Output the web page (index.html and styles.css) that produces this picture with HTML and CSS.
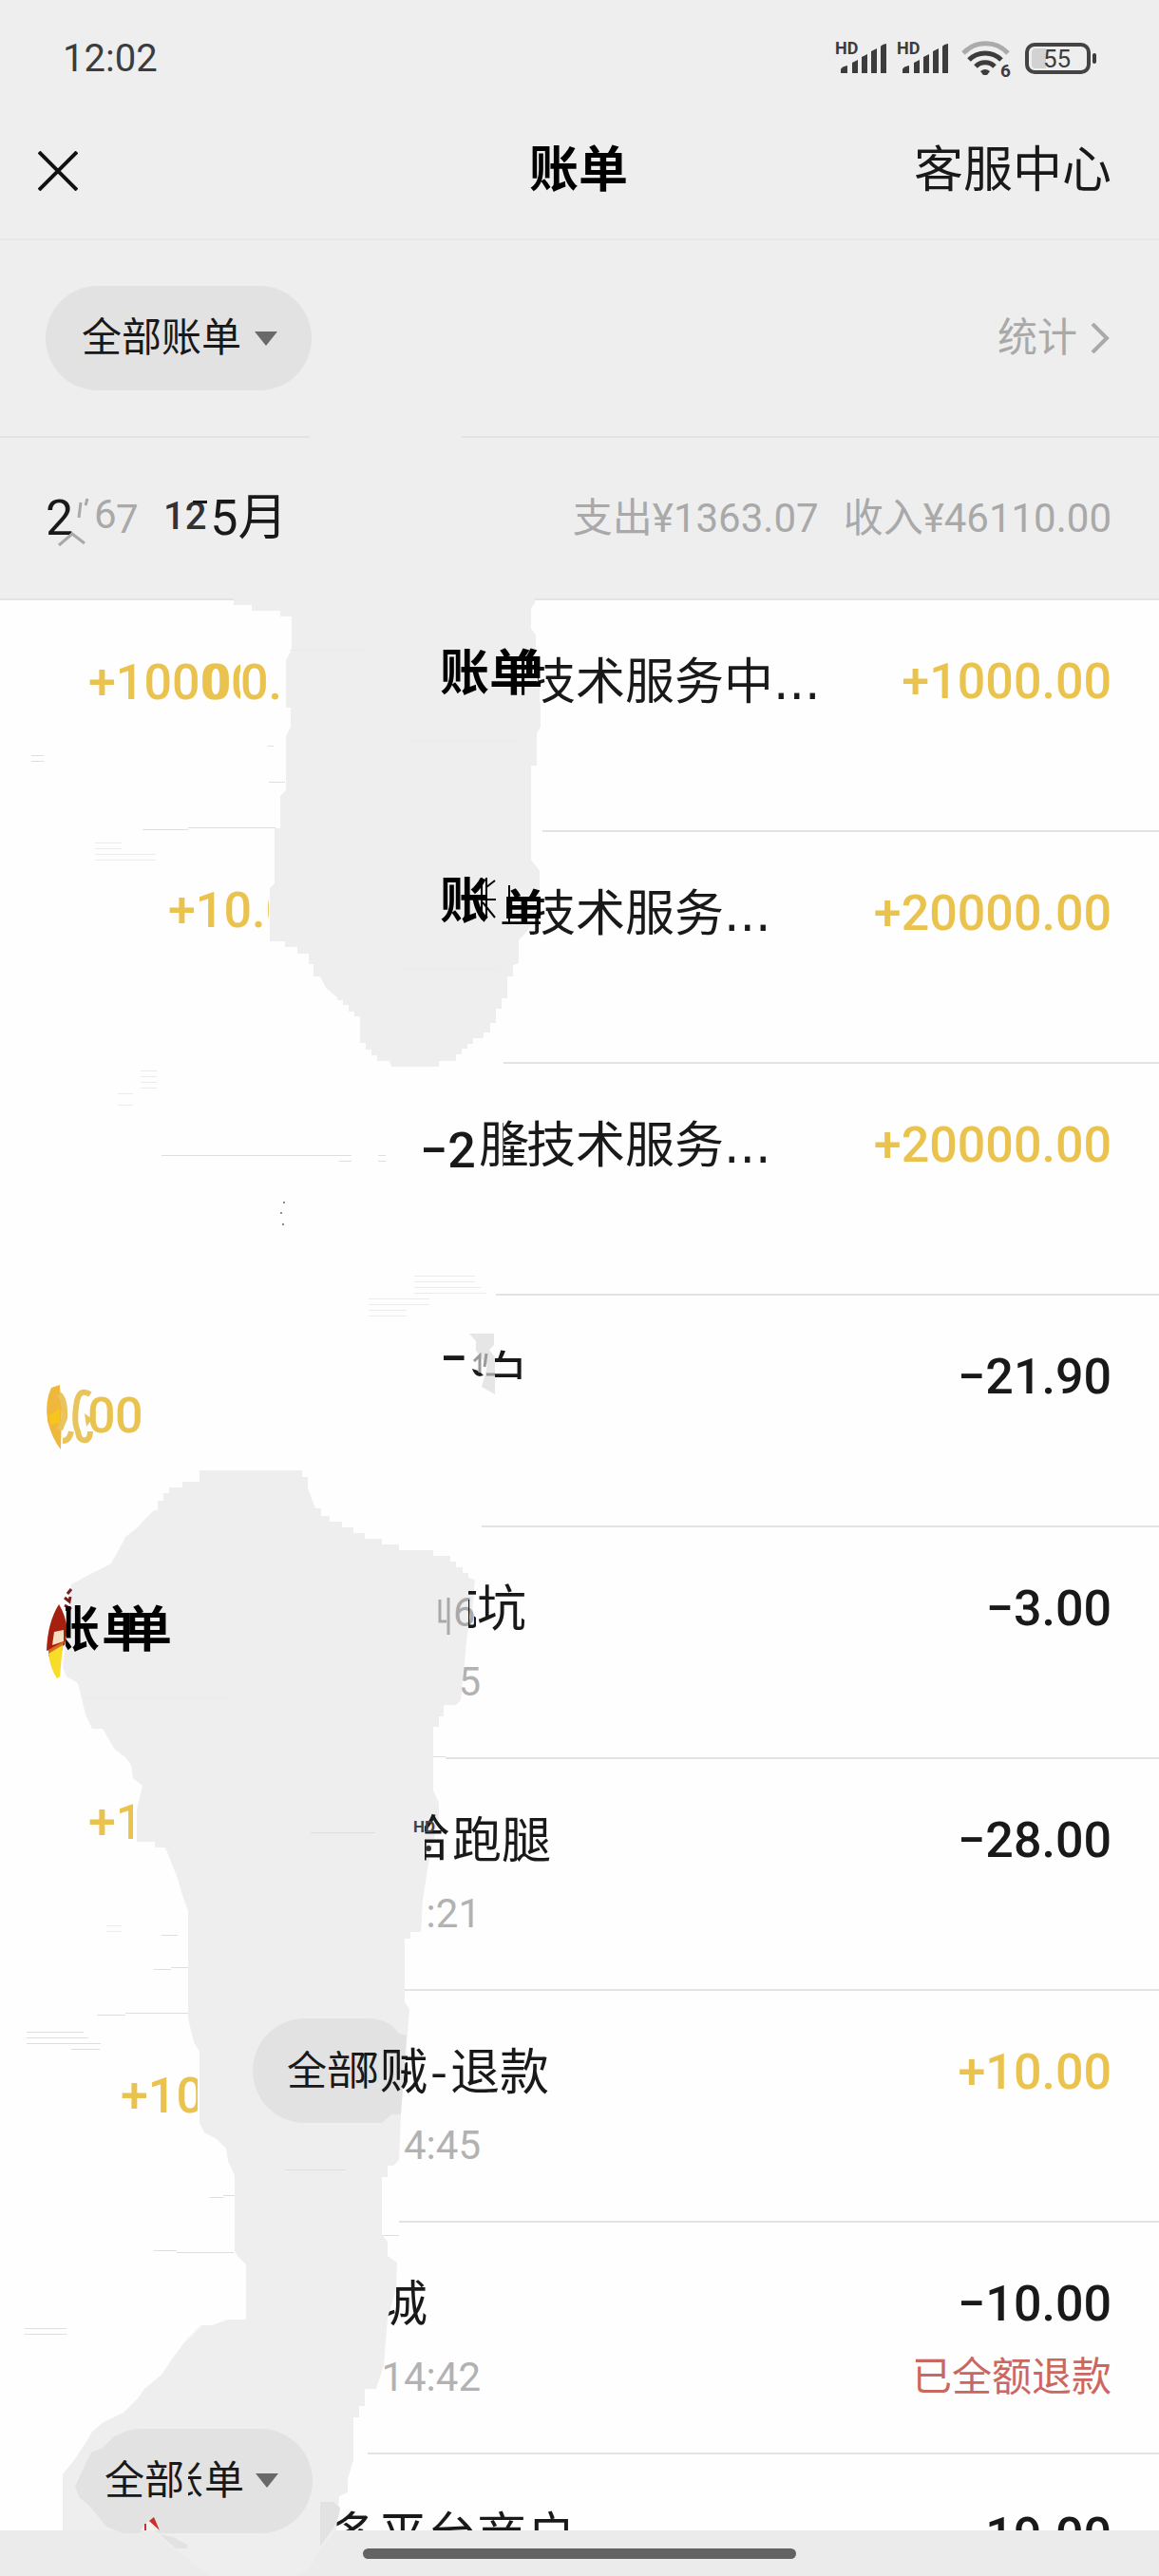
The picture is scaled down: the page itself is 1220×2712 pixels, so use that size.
FILE: index.html
```html
<!DOCTYPE html>
<html lang="zh-CN">
<head>
  <meta charset="UTF-8">
  <meta name="viewport" content="width=device-width, initial-scale=1">
  <title>账单</title>
  <link rel="stylesheet" href="styles.css">
</head>
<body>
  <div class="screen">

    <!-- Status bar -->
    <div class="status-bar">
      <span class="clock">12:02</span>
      <svg class="status-icons" viewBox="870 30 300 70" width="300" height="70">
        <g id="signal" fill="#3c3c3c">
          <text class="hd" x="879" y="57">HD</text>
          <path d="M885 77v-4q1-3 7-4v8zM897 77v-11l6-3v14zM907 77v-17l6-3v20zM917 77v-23l6-3v26zM927 77v-28q1-2 6-3v31z"/>
        </g>
        <use href="#signal" x="65"/>
        <g fill="none" stroke-width="5">
          <path stroke="#ababab" d="M1014 56a32 32 0 0 1 47 0"/>
          <path stroke="#3c3c3c" d="M1020 63a24 24 0 0 1 34 0"/>
          <path stroke="#3c3c3c" d="M1027 70a14 14 0 0 1 20 0"/>
        </g>
        <path fill="#3c3c3c" d="M1032 75q5-4 10 0l-3 4h-4z"/>
        <text class="wifi-gen" x="1053" y="81">6</text>
        <rect x="1081" y="47" width="65" height="29" rx="8" fill="none" stroke="#444" stroke-width="4"/>
        <path fill="#d2d2d2" d="M1089 51h12v21h-12q-3-1-3-4v-13q0-3 3-4z"/>
        <rect x="1150" y="56" width="4" height="11" rx="2" fill="#3c3c3c"/>
        <text class="battery" x="1098" y="71">55</text>
      </svg>
    </div>

    <!-- Title bar -->
    <header class="nav">
      <button class="close" aria-label="关闭">
        <svg viewBox="0 0 42 42" width="42" height="42"><path d="M1 1l40 40M41 1L1 41"/></svg>
      </button>
      <h1>账单</h1>
      <a href="#" class="service">客服中心</a>
    </header>

    <!-- Filter -->
    <div class="filter">
      <button class="pill">全部账单<svg viewBox="0 0 24 15" width="24" height="15"><path d="M0 0h24L12 15z"/></svg></button>
      <a href="#" class="stats">统计<svg viewBox="0 0 20 32" width="20" height="32"><path d="M2 1l15 15L2 31"/></svg></a>
    </div>

    <!-- Month summary -->
    <div class="month">
      <button class="month-pick"><span>2</span><span>5月</span></button>
      <div class="summary"><span>支出¥1363.07</span><span>收入¥46110.00</span></div>
    </div>

    <!-- Bills -->
    <ul class="bills">
      <li class="bill">
        <div class="info"><p class="name hide-7">技术服务中<span class="dots">...</span></p></div>
        <div class="sum"><p class="amount income">+1000.00</p></div>
      </li>
      <li class="bill">
        <div class="info"><p class="name hide-7">技术服务<span class="dots">...</span></p></div>
        <div class="sum"><p class="amount income">+20000.00</p></div>
      </li>
      <li class="bill">
        <div class="info"><p class="name hide-7">技术服务<span class="dots">...</span></p></div>
        <div class="sum"><p class="amount income">+20000.00</p></div>
      </li>
      <li class="bill">
        <div class="info"></div>
        <div class="sum"><p class="amount">−21.90</p></div>
      </li>
      <li class="bill">
        <div class="info"><p class="name hide-6">坑</p><p class="time">5</p></div>
        <div class="sum"><p class="amount">−3.00</p></div>
      </li>
      <li class="bill">
        <div class="info"><p class="name hide-5">跑腿</p><p class="time">:21</p></div>
        <div class="sum"><p class="amount">−28.00</p></div>
      </li>
      <li class="bill">
        <div class="info"><p class="name hide-4">贼<span class="dash">-</span>退款</p><p class="time">4:45</p></div>
        <div class="sum"><p class="amount income">+10.00</p></div>
      </li>
      <li class="bill">
        <div class="info"><p class="name hide-4">城</p><p class="time">14:42</p></div>
        <div class="sum"><p class="amount">−10.00</p><p class="refund">已全额退款</p></div>
      </li>
      <li class="bill">
        <div class="info"><p class="name hide-3">多平台商户</p></div>
        <div class="sum"><p class="amount">19.00</p></div>
      </li>
    </ul>

    <div class="home-bar"><span></span></div>

    <!-- Smudges over the left side of the list -->
    <svg class="smudge" viewBox="0 0 1220 2712" width="1220" height="2712" aria-hidden="true">
      <defs>
        <clipPath id="c-zero"><rect x="245" y="690" width="8" height="60"/></clipPath>
        <clipPath id="c-dan2"><rect x="549" y="680" width="20" height="60"/></clipPath>
        <clipPath id="c-ten"><rect x="170" y="930" width="113" height="60"/></clipPath>
        <clipPath id="c-yue"><rect x="500" y="1170" width="30" height="70"/></clipPath>
        <clipPath id="c-long"><rect x="530" y="1170" width="30" height="70"/></clipPath>
        <clipPath id="c-bai"><rect x="521" y="1396" width="40" height="56"/></clipPath>
        <clipPath id="c-one"><rect x="90" y="1890" width="50" height="60"/></clipPath>
        <clipPath id="c-plusten"><rect x="120" y="2180" width="88" height="60"/></clipPath>
        <clipPath id="c-ha"><rect x="447" y="1900" width="30" height="70"/></clipPath>
        <clipPath id="c-zhang"><rect x="69" y="1680" width="40" height="70"/></clipPath>
        <clipPath id="c-dan"><rect x="109" y="1680" width="27" height="70"/></clipPath>
        <clipPath id="c-half"><rect x="135" y="1680" width="60" height="70"/></clipPath>
        <clipPath id="c-ghost"><rect x="380" y="2140" width="18" height="70"/></clipPath>
        <clipPath id="c-left"><rect x="400" y="2140" width="29" height="70"/></clipPath>
        <clipPath id="c-cut"><rect x="198" y="2580" width="15" height="60"/></clipPath>
        <clipPath id="c-top"><rect x="520" y="932" width="49" height="41"/></clipPath>
        <clipPath id="c-keng"><rect x="493" y="1660" width="8" height="70"/></clipPath>
        <clipPath id="c-five"><rect x="200" y="515" width="18" height="15"/></clipPath>
      </defs>

      <!-- separators wiped out on the left -->
      <path class="paper" d="M0 872h571v6H0zM0 1116h530v6H0zM0 1360h522v6H0zM0 1604h507v6H0zM0 1848h469v6H0zM0 2092h426v6H0zM0 2336h420v6H0zM0 2581h387v6H0z"/>
      <path class="band" d="M326 456h160v8H326z"/>

      <!-- grey blots -->
      <path class="band" d="M246 625V637H265V643H295V649H307V684L301 695V745H306V765L301 775V832L295 838V872H289V930L284 935V991H300V997H313V1004H325V1015H330V1028H337L343 1040 355 1050V1053H361V1058H367V1065H373V1070H379V1098H385V1105H391V1111H397V1117H410L412 1123H462V1117H480V1110H486V1104H492V1099H498V1093H509V1087H516V1077H522V1062H528V1051H534V1028H540V1016L546 1014V990L555 980 562 968 568 950V917L559 905V806H565V772L569 765V745L564 690V668L559 662V640L563 635V625z"/>
      <path class="band" d="M210 1548H318V1555H324V1567L332 1588H338V1596H347V1602H360V1608H372V1614H384V1620H402V1626H420V1632H456V1638H474V1644H480V1650H487V1656H493V1661L500 1663 497 1700 492 1720 485 1790 480 1795H467V1807H462V1818H456V1885L462 1898V1915L453 1950 445 2000 443 2034H432V2041H426V2108L431 2115 429 2140 422 2225 420 2274 414 2280H408V2292H402V2353L408 2360V2375L418 2382 417 2410 408 2440 404 2490 396 2515H384V2533H378V2545H372V2590L366 2610V2624L357 2628 354 2664 340 2680 325 2705 310 2712H220L160 2664H66V2605L78 2590 90 2572 97 2560 109 2550 130 2540 145 2525 152 2515 170 2500 180 2485 195 2465 212 2448H223L240 2442H259V2384L250 2375 247 2370V2290L240 2275 238 2262 228 2252 215 2245 210 2235V2160L204 2150 198 2125V2012L192 1995 186 1975 180 1960 174 1945H163V1939H144V1905L150 1880 140 1872 138 1858 132 1850 121 1842 108 1820H97L90 1805 84 1780 82 1772 70 1765 66 1755 75 1668 90 1660 117 1646 127 1628 132 1618 145 1608 152 1600 162 1590H166V1580H172V1572H178V1566H192V1560H210z"/>

      <!-- stray line fragments -->
      <path class="hair" d="M150 873.500h48M198 871.500h92M283 823.500h17M33 795.500h13M33 801.500h13M282 785.500h6M170 1216.500h200M357 1222.500h13M398 1216.500h8M398 1222.500h8M327 1929.500h68M300 2284.500h64M170 2037.500h17M162 2073.500h18M180 2071.500h18M102 2121.500h30M132 2119.500h66M28 2139.500h60M28 2145.500h65M28 2151.500h78M75 2157.500h30M221 2313.500h14M235 2311.500h12M162 2369.500h24M186 2371.500h60M402 2353.500h18M26 2451.500h44M26 2457.500h44M456 1849.500h13"/>
      <path class="hair faint" d="M100 887.500h28M100 893.500h28M100 899.500h64M100 905.500h64M148 1127.500h17M148 1133.500h17M148 1139.500h17M148 1145.500h17M124 1151.500h16M124 1163.500h16M436 1343.500h64M436 1349.500h64M436 1355.500h70M436 1361.500h76M388 1367.500h64M388 1373.500h64M388 1379.500h40M388 1385.500h40M305 684.500h80M433 780.500h110M425 1020.500h100M90 1788.500h150M112 2027.500h16M112 2033.500h16"/>

      <!-- month row -->
      <text class="grey" x="99" y="556">6</text>
      <text class="grey" x="122" y="561">7</text>
      <text class="clock-mark" x="172" y="557">12</text>
      <text class="big" x="196" y="564" clip-path="url(#c-five)">5</text>
      <path class="tick" d="M62 574l14-12 13 10M83 545l2-16M90 532l2-7"/>

      <!-- first two rows -->
      <text class="gold" x="93" y="736">+1000</text>
      <text class="gold" x="214" y="736">0</text>
      <text class="gold" x="243" y="736" clip-path="url(#c-zero)">0</text>
      <text class="gold" x="253" y="736">0.</text>
      <text class="gold" x="177" y="976" clip-path="url(#c-ten)">+10.0</text>
      <text class="heavy" x="463" y="727">账单</text>
      <text class="heavy" x="523" y="727" clip-path="url(#c-dan2)">单</text>
      <text class="heavy" x="463" y="967">账</text>
      <path class="stem" d="M507 924v44M512 924v42M536 932v40"/>
      <path class="stem" d="M506 947h16M512 934l9-7M508 950l13 16"/>
      <text class="heavy" x="526" y="980" clip-path="url(#c-top)">单</text>

      <!-- third and fourth rows -->
      <text class="dark-sum" x="442" y="1229">−2</text>
      <text class="big" x="504" y="1224" clip-path="url(#c-yue)">服</text>
      <text class="big" x="505" y="1224" clip-path="url(#c-long)">隆</text>
      <path fill="#8a8a8a" d="M297 1288h2v2h-2zM295 1276h2v2h-2zM298 1265h2v2h-2z"/>
      <text class="dark-sum" x="463" y="1448">−</text>
      <path fill="#e6e6e6" d="M494 1404h26v12l-5 5 6 8v39l-14-8 6-22-12-16v-10z"/>
      <path fill="#1b1b1b" d="M497 1441q8 2 12 7l-4 1q-6-1-8-8z"/>
      <path fill="none" stroke="#9a9a9a" stroke-width="3" d="M499 1433l6-6v18M512 1425l-2 14M512 1447h9"/>
      <text class="big" x="504" y="1466" clip-path="url(#c-bai)">白</text>
      <path fill="#efb73c" d="M54 1461l9-3v3l2 20-1 45q-9-11-14-30-3-20 4-35z"/>
      <path fill="#f6c51f" d="M52 1490l11-7v15l-10 2z"/>
      <path fill="none" stroke="#e9c45c" stroke-width="6" d="M62 1468q7 5 6 25l-5 12M66 1517q7 0 9-10M95 1468q-11-7-14 7-4 22 1 32 1 11 9 9 4-2 4-9"/>
      <path fill="#e9c45c" d="M89 1488l8 6-6 8z"/>
      <text class="gold" x="92" y="1508">0</text>
      <text class="gold" x="121" y="1508">0</text>

      <!-- fifth and sixth rows -->
      <path fill="#a5200f" d="M62 1689q7 11 9 27l-3 16-19 6q1-30 13-49z"/>
      <path fill="#f4dfc0" d="M57 1718l10-2v12l-12 4z"/>
      <path fill="#dd6a1c" d="M51 1737l16-9-2 12-14 4z"/>
      <path fill="#f7dc29" d="M51 1741l15-9-3 33-3 2q-7-10-9-26z"/>
      <path fill="none" stroke="#7b1e1e" stroke-width="3" d="M68 1682l5 4 1-5M68 1690l7 4M75 1673l-4 5"/>
      <text class="heavy" x="53" y="1734" clip-path="url(#c-zhang)">账</text>
      <text class="heavy" x="107" y="1734" clip-path="url(#c-dan)">单</text>
      <text class="heavy" x="129" y="1734" clip-path="url(#c-half)">单</text>
      <text class="grey" x="477" y="1712">6</text>
      <path class="tick" d="M463 1684v23h7M472 1682v39"/>
      <text class="big" x="452" y="1710" clip-path="url(#c-keng)">坑</text>
      <text class="gold" x="93" y="1936" clip-path="url(#c-one)">+1</text>
      <text class="big" x="422" y="1954" clip-path="url(#c-ha)">哈</text>
      <text class="hd-mark" x="435" y="1929">HD</text>
      <circle cx="451" cy="1946" r="3" fill="#333"/>

      <!-- seventh row -->
      <text class="gold" x="127" y="2224" clip-path="url(#c-plusten)">+10</text>
      <path class="blot" d="M321 2125H390Q410 2126 420 2141L428 2143 422 2226 412 2226 402 2235H321A55 55 0 0 1 321 2125z"/>
      <text class="label" x="302" y="2195">全部</text>
      <text class="label" x="357" y="2195" clip-path="url(#c-ghost)">部</text>
      <text class="big" x="400" y="2199" clip-path="url(#c-left)">贼</text>

      <!-- last row -->
      <path class="blot" d="M146 2557H274A55 55 0 0 1 274 2667H166L158 2660 146 2667H130L112 2660 100 2645 92 2636 84 2630 79 2618 88 2598 96 2582 108 2577 120 2565 134 2559z"/>
      <path fill="#e2e2e2" d="M337 2634h14l7 6q-1 14-9 24l-12 17zM168 2668l14 3 15 8v4h-12z"/>
      <text class="label" x="110" y="2626">全部</text>
      <text class="label" x="172" y="2626" clip-path="url(#c-cut)">账</text>
      <text class="label" x="215" y="2626">单</text>
      <path fill="#696969" d="M269 2604h24l-12 15z"/>
      <path fill="#f6f0ee" d="M148 2664l8-10 12 8v2z"/>
      <path fill="#c9302c" d="M157 2654l5-4 6 14zM152 2657h2v7h-2z"/>
    </svg>
  </div>
</body>
</html>
```

FILE: styles.css
```css
:root {
  --bg: #eeeeee;
  --line: #e3e3e3;
  --text: #191919;
  --muted: #a9a9a9;
  --gold: #eac34f;
}

* {
  box-sizing: border-box;
}

body {
  margin: 0;
  background-color: var(--bg);
  color: var(--text);
  font-family: Roboto, "Noto Sans CJK SC", sans-serif;
}

h1, p, ul {
  margin: 0;
  padding: 0;
}

button {
  border: none;
  background: none;
  padding: 0;
  font: inherit;
  color: inherit;
  cursor: pointer;
}

a {
  color: inherit;
  text-decoration: none;
}

.screen {
  position: relative;
  display: flex;
  flex-direction: column;
  height: 100vh;
  overflow: hidden;
}

/* Status bar */
.status-bar {
  display: flex;
  justify-content: space-between;
  align-items: flex-start;
  height: 124px;
  padding: 30px 50px 0 66px;
  flex-shrink: 0;
}

.clock {
  font-size: 40px;
  line-height: 64px;
  color: #3c3c3c;
}

.status-icons {
  display: block;
}

.hd {
  font-size: 18px;
  font-weight: bold;
}

.wifi-gen {
  font-size: 19px;
  font-weight: bold;
  fill: #3c3c3c;
}

.battery {
  font-size: 26px;
  fill: #3c3c3c;
}

/* Title bar */
.nav {
  display: grid;
  grid-template-columns: 1fr auto 1fr;
  align-items: center;
  height: 129px;
  padding: 0 50px 16px 40px;
  border-bottom: 2px solid #e8e8e8;
  flex-shrink: 0;
}

.close {
  justify-self: start;
  display: flex;
}

.close svg {
  fill: none;
  stroke: #111;
  stroke-width: 4;
}

.nav h1 {
  padding-left: 8px;
  font-size: 52px;
  font-weight: 700;
  line-height: 60px;
  color: #000;
}

.service {
  justify-self: end;
  font-size: 52px;
  line-height: 60px;
}

/* Filter */
.filter {
  display: flex;
  justify-content: space-between;
  align-items: center;
  height: 208px;
  padding: 0 52px 0 48px;
  border-bottom: 2px solid var(--line);
  flex-shrink: 0;
}

.pill {
  display: flex;
  align-items: center;
  gap: 14px;
  height: 110px;
  padding: 0 36px 0 38px;
  border-radius: 55px;
  background-color: #e2e2e2;
  font-size: 42px;
  line-height: 42px;
}

.pill svg {
  fill: #696969;
}

.stats {
  display: flex;
  align-items: center;
  gap: 14px;
  font-size: 42px;
  line-height: 42px;
  color: var(--muted);
}

.stats svg {
  fill: none;
  stroke: var(--muted);
  stroke-width: 4;
}

/* Month summary */
.month {
  display: flex;
  justify-content: space-between;
  align-items: center;
  height: 171px;
  padding: 0 50px 0 48px;
  border-bottom: 2px solid var(--line);
  flex-shrink: 0;
}

.month-pick {
  display: flex;
  gap: 144px;
  font-size: 52px;
  line-height: 60px;
}

.summary {
  display: flex;
  gap: 26px;
  font-size: 42px;
  line-height: 42px;
  color: var(--muted);
}

/* Bills */
.bills {
  flex: 1;
  overflow: hidden;
  list-style: none;
  background-color: #fefefe;
}

.bill {
  display: flex;
  justify-content: space-between;
  height: 244px;
  padding: 56px 50px 0 190px;
  border-bottom: 2px solid var(--line);
}

.name {
  font-family: "Noto Sans CJK SC", sans-serif;
  font-size: 52px;
  line-height: 52px;
  white-space: nowrap;
}

/* leading characters of the name that stay hidden */
.hide-3 { padding-left: 3em; }
.hide-4 { padding-left: 4em; }
.hide-5 { padding-left: 5.5em; }
.hide-6 { padding-left: 6em; }
.hide-7 { padding-left: 7em; }

.dash {
  padding: 0 3px;
}

.dots {
  font-family: "DejaVu Sans", sans-serif;
}

.time {
  width: 316px;
  margin-top: 30px;
  font-size: 42px;
  line-height: 50px;
  text-align: right;
  color: #b2b2b2;
}

.sum {
  text-align: right;
}

.amount {
  font-size: 52px;
  font-weight: 500;
  line-height: 60px;
}

.income {
  color: var(--gold);
}

.refund {
  margin-top: 22px;
  font-size: 42px;
  line-height: 50px;
  color: #cb6761;
}

/* Home bar */
.home-bar {
  display: flex;
  justify-content: center;
  align-items: center;
  height: 48px;
  background-color: #ebebeb;
  flex-shrink: 0;
}

.home-bar span {
  width: 456px;
  height: 11px;
  border-radius: 6px;
  background-color: #636363;
}

/* Smudges */
.smudge {
  position: absolute;
  top: 0;
  left: 0;
  pointer-events: none;
}

.paper {
  fill: #fefefe;
}

.band {
  fill: var(--bg);
}

.blot {
  fill: #e2e2e2;
}

.hair {
  stroke: #dedede;
  stroke-width: 1;
}

.faint {
  stroke: #ebebeb;
}

.tick {
  fill: none;
  stroke: var(--muted);
  stroke-width: 3;
}

.stem {
  stroke: #000;
  stroke-width: 2;
}

.grey {
  font-size: 42px;
  fill: var(--muted);
}

.clock-mark {
  font-size: 40px;
  font-weight: 500;
  fill: #333;
}

.gold {
  font-size: 52px;
  font-weight: 500;
  fill: var(--gold);
}

.dark-sum {
  font-size: 52px;
  font-weight: 500;
  fill: var(--text);
}

.heavy {
  font-size: 52px;
  font-weight: 700;
  fill: #000;
}

.big {
  font-size: 52px;
  fill: var(--text);
}

.label {
  font-size: 42px;
  fill: var(--text);
}

.hd-mark {
  font-size: 17px;
  font-weight: bold;
  fill: #444;
}
```
